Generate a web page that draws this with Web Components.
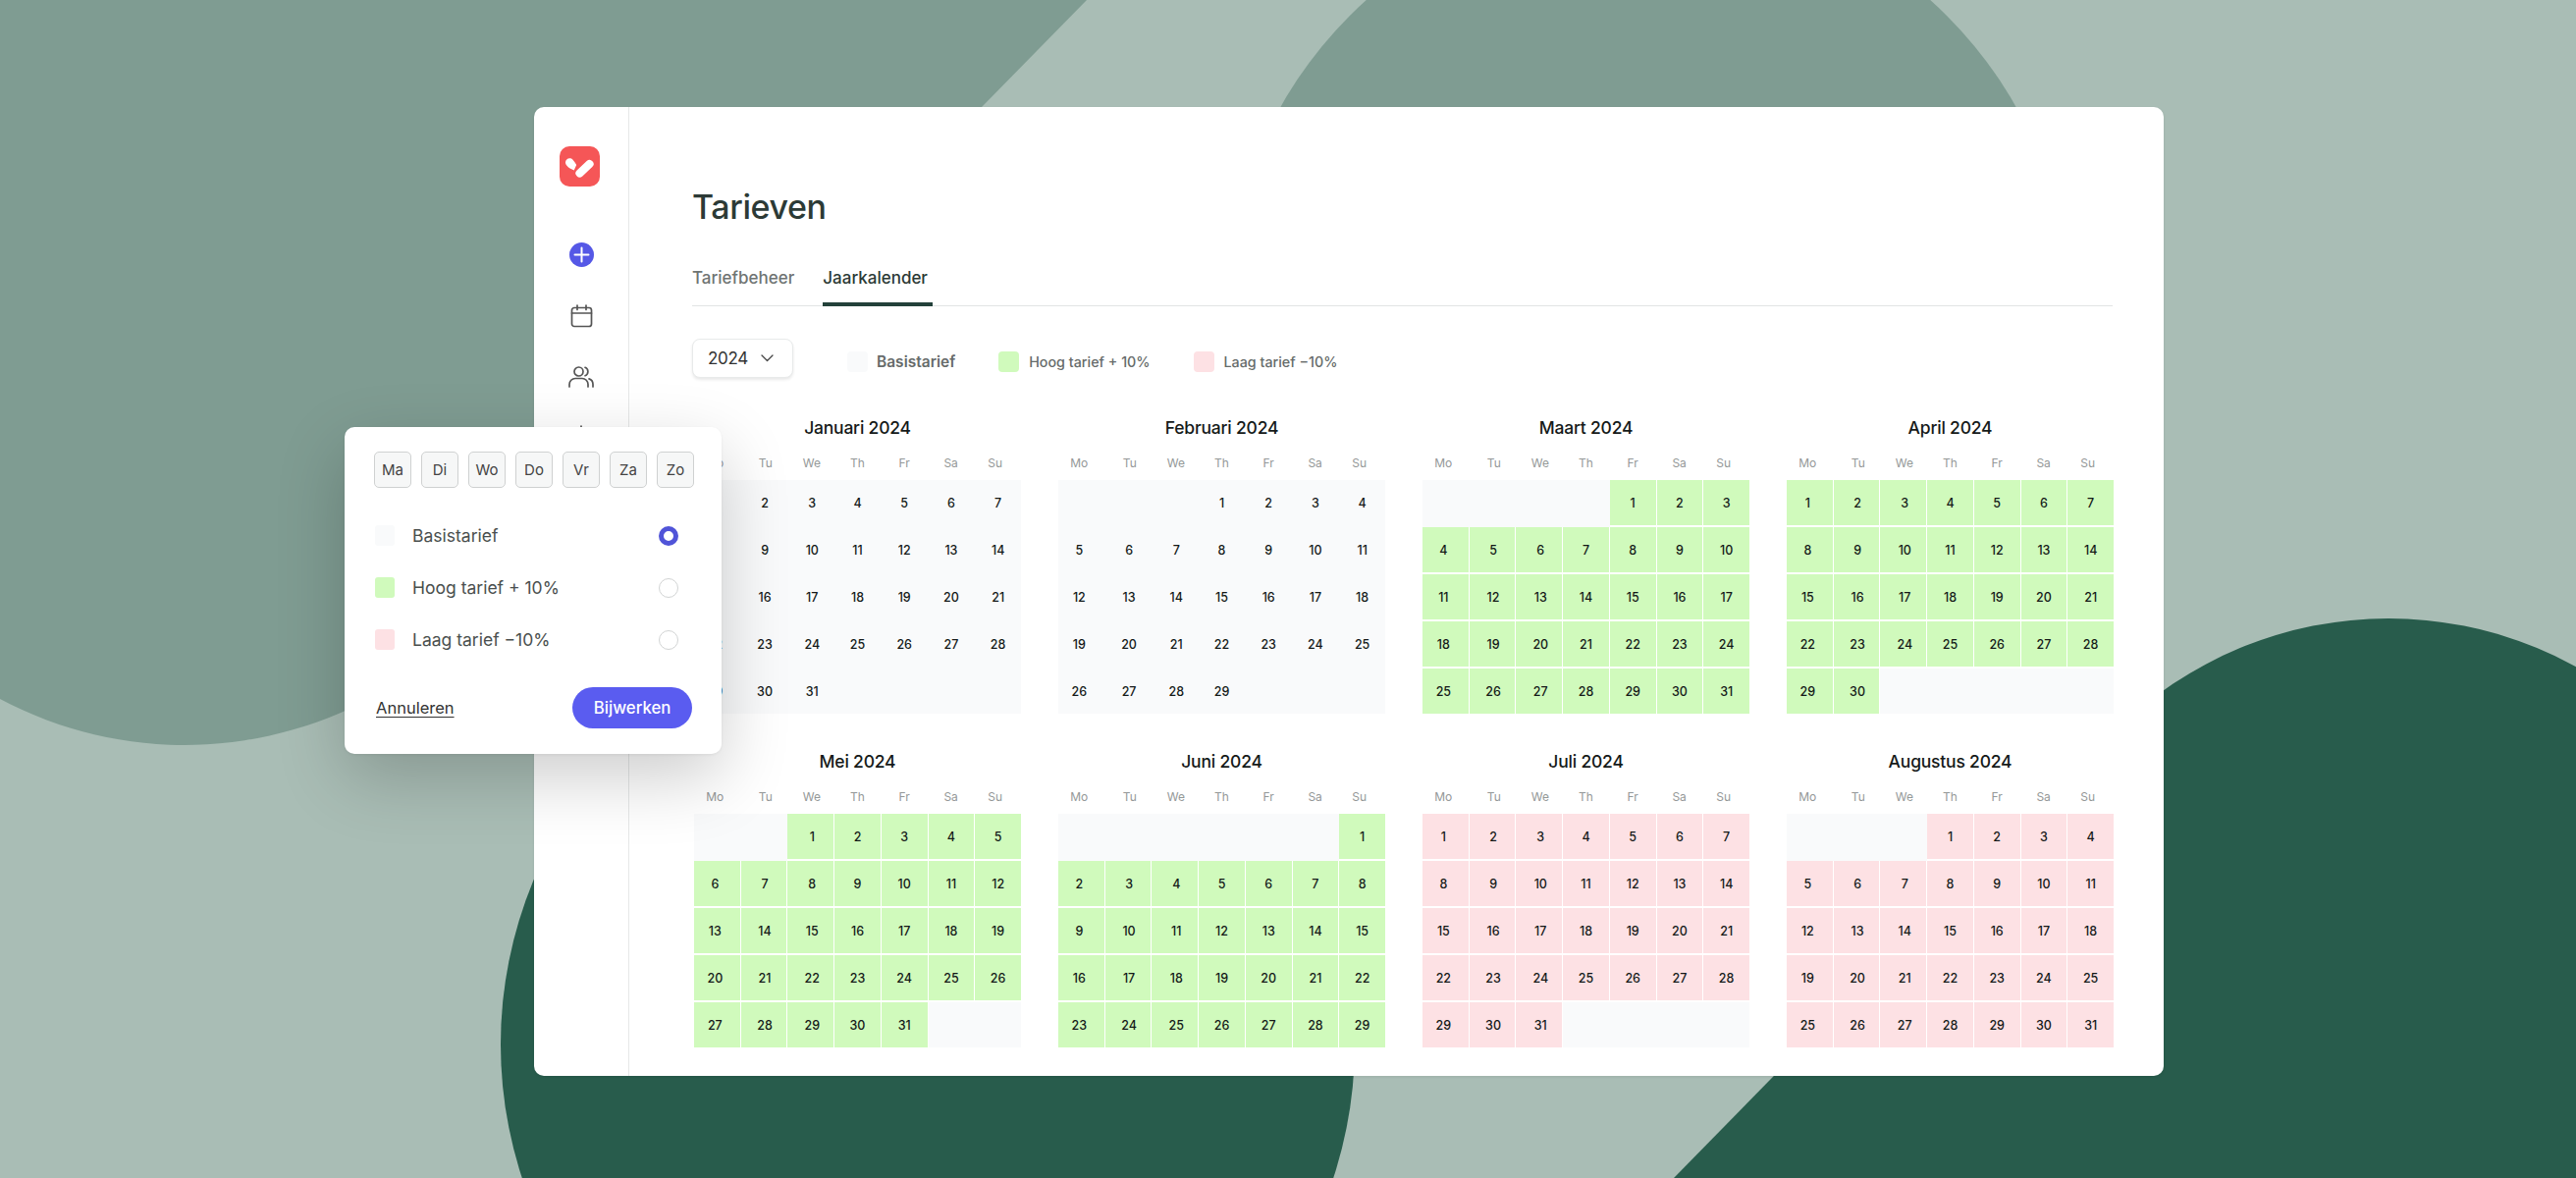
<!DOCTYPE html>
<html lang="nl">
<head>
<meta charset="utf-8">
<title>Tarieven</title>
<style>
html, body { margin: 0; padding: 0; background: #a9bdb5; }
body { font-family: "Inter", "Liberation Sans", sans-serif; overflow: hidden; }
</style>
</head>
<body>
<rate-page>
  <side-nav slot="nav"></side-nav>

  <page-title>Tarieven</page-title>
  <tab-bar>
    <tab-item>Tariefbeheer</tab-item>
    <tab-item active>Jaarkalender</tab-item>
  </tab-bar>

  <tool-bar>
    <year-select>2024</year-select>
    <legend-item tone="base" strong>Basistarief</legend-item>
    <legend-item tone="high">Hoog tarief + 10%</legend-item>
    <legend-item tone="low">Laag tarief −10%</legend-item>
  </tool-bar>

  <year-grid>
    <cal-month offset="0" days="1-31" tone="base">Januari 2024</cal-month>
    <cal-month offset="3" days="1-29" tone="base">Februari 2024</cal-month>
    <cal-month offset="4" days="1-31" tone="high">Maart 2024</cal-month>
    <cal-month offset="0" days="1-30" tone="high">April 2024</cal-month>
    <cal-month offset="2" days="1-31" tone="high">Mei 2024</cal-month>
    <cal-month offset="6" days="1-29" tone="high">Juni 2024</cal-month>
    <cal-month offset="0" days="1-31" tone="low">Juli 2024</cal-month>
    <cal-month offset="3" days="1-25,25-31" tone="low">Augustus 2024</cal-month>
  </year-grid>

  <rate-popup slot="popup">
    <day-chip>Ma</day-chip><day-chip>Di</day-chip><day-chip>Wo</day-chip><day-chip>Do</day-chip><day-chip>Vr</day-chip><day-chip>Za</day-chip><day-chip>Zo</day-chip>
    <rate-option slot="options" tone="base" checked>Basistarief</rate-option>
    <rate-option slot="options" tone="high">Hoog tarief + 10%</rate-option>
    <rate-option slot="options" tone="low">Laag tarief −10%</rate-option>
  </rate-popup>
</rate-page>

<script>
const Tones = {
  base: "#f9fafb",
  high: "#d0fabc",
  low: "#fde1e4",
};

const WEEKDAYS = ["Mo", "Tu", "We", "Th", "Fr", "Sa", "Su"];

const define = (name, markup, render) => {
  customElements.define(
    name,
    class extends HTMLElement {
      constructor() {
        super();
        this.attachShadow({ mode: "open" });
        this.shadowRoot.innerHTML = markup;
      }
      connectedCallback() {
        if (render) render(this);
      }
    }
  );
};

define("rate-page", `
<style>
:host { display: grid; width: 2624px; height: 1200px; overflow: hidden; position: relative; color: #2c3a36; }
.backdrop, .card { grid-area: 1 / 1; }
.backdrop { width: 2624px; height: 1200px; display: block; }
.card {
  margin: 109px 420px 104px 544px;
  display: flex;
  background: #fff;
  border-radius: 10px;
  box-shadow: 0 1px 3px rgba(0, 0, 0, .08);
  overflow: hidden;
}
main { flex: 1; min-width: 0; padding: 82px 52px 0 64px; display: flex; flex-direction: column; }
.popup { position: absolute; left: 351px; top: 435px; }
</style>
<svg class="backdrop" viewBox="0 0 2624 1200" aria-hidden="true">
  <rect width="2624" height="1200" fill="#a9bdb5"/>
  <path fill="#7f9c92" d="M0 0H1107L1000 109L700 420L588 360A400 400 0 0 1 0 712Z"/>
  <circle cx="1679" cy="320" r="430" fill="#7f9c92"/>
  <circle cx="945" cy="1064" r="435" fill="#285c4c"/>
  <circle cx="2433" cy="1025" r="395" fill="#285c4c"/>
  <path fill="#285c4c" d="M1705 1200L1950 950H2624V1200Z"/>
</svg>
<div class="card">
  <slot name="nav"></slot>
  <main><slot></slot></main>
</div>
<div class="popup"><slot name="popup"></slot></div>
`);

define("side-nav", `
<style>
:host { display: flex; flex-direction: column; align-items: center; width: 96px; flex: none; border-right: 1px solid #e6e8e8; padding-top: 40px; box-sizing: content-box; }
svg { display: block; flex: none; }
.logo { margin-left: -3px; }
.plus { margin-top: 57px; }
.cal { margin-top: 38px; }
.users { margin-top: 39px; }
.tag { margin-top: 38px; }
</style>
<svg class="logo" width="41" height="41" viewBox="0 0 41 41">
  <rect width="41" height="41" rx="10" fill="#f55657"/>
  <path d="M6 16.500c0-4 5-5.700 7.500-2.700c1.600 1.800 2.900 3.500 3.700 5.200l-2.500 5.500c-4-1.500-8.700-4.800-8.700-8z" fill="#fff"/>
  <path d="M20.500 27.500L30.500 18" stroke="#fff" stroke-width="8.200" stroke-linecap="round" fill="none"/>
</svg>
<svg class="plus" width="25" height="25" viewBox="0 0 25 25">
  <circle cx="12.500" cy="12.500" r="12.500" fill="#5558e6"/>
  <path d="M12.500 5.500v14M5.500 12.500h14" stroke="#fff" stroke-width="2" stroke-linecap="round"/>
</svg>
<svg class="cal" width="23" height="24" viewBox="0 0 23 24" fill="none" stroke="#555" stroke-width="1.700" stroke-linecap="round" stroke-linejoin="round">
  <rect x="1.500" y="3.500" width="20" height="19" rx="2.500"/>
  <path d="M1.500 9h20M7 1v4.500M16 1v4.500"/>
</svg>
<svg class="users" width="26" height="22" viewBox="0 0 26 22" fill="none" stroke="#555" stroke-width="1.700" stroke-linecap="round">
  <circle cx="10.500" cy="5.500" r="4.500"/>
  <path d="M1 21v-2.500c0-3.300 2.700-6 6-6h7c3.300 0 6 2.700 6 6V21"/>
  <path d="M17 1.300a4.500 4.500 0 0 1 0 8.400M21 12.900c2.400.8 4 3 4 5.600V21"/>
</svg>
<svg class="tag" width="24" height="24" viewBox="0 0 24 24" fill="none" stroke="#555" stroke-width="1.700" stroke-linecap="round">
  <path d="M12 1v22M5 6h14M5 18h14"/>
</svg>
`);

define("page-title", `
<style>
:host { display: block; font: 500 34px/40px "Inter", "Liberation Sans", sans-serif; letter-spacing: -.4px; color: #2c3a36; }
</style>
<slot></slot>
`);

define("tab-bar", `
<style>
:host { display: flex; gap: 27px; margin-top: 40px; height: 40px; border-bottom: 1px solid #e2e4e4; }
</style>
<slot></slot>
`);

define("tab-item", `
<style>
:host { display: block; height: 41px; box-sizing: border-box; padding-right: 2px; font: 500 17px/24px "Inter", "Liberation Sans", sans-serif; color: #6f7473; }
:host([active]) { color: #2c3a36; border-bottom: 4px solid #23413a; padding-right: 5px; }
</style>
<slot></slot>
`);

define("tool-bar", `
<style>
:host { display: flex; align-items: center; margin-top: 33px; height: 40px; gap: 44px; }
::slotted(year-select) { margin-right: 11px; }
</style>
<slot></slot>
`);

define("year-select", `
<style>
:host { display: flex; align-items: center; justify-content: space-between; width: 103px; height: 40px; box-sizing: border-box; padding: 0 19px 0 15px; border: 1px solid #e8eaea; border-radius: 8px; box-shadow: 0 2px 3px rgba(0, 0, 0, .09); background: #fff; font: 400 17px/24px "Inter", "Liberation Sans", sans-serif; color: #333; letter-spacing: -.3px; }
svg { display: block; }
</style>
<slot></slot>
<svg width="13" height="8" viewBox="0 0 13 8" fill="none" stroke="#444" stroke-width="1.300" stroke-linecap="round" stroke-linejoin="round"><path d="M1 1l5.500 5.500L12 1"/></svg>
`);

define("legend-item", `
<style>
:host { display: flex; align-items: center; gap: 10px; margin-top: 6px; font: 500 14.300px/21px "Inter", "Liberation Sans", sans-serif; color: #666b6a; }
:host([strong]) { font-size: 15.500px; font-weight: 600; gap: 9px; }
.swatch { width: 21px; height: 21px; border-radius: 4px; flex: none; }
</style>
<span class="swatch"></span><slot></slot>
`, (el) => {
  el.shadowRoot.querySelector(".swatch").style.background = Tones[el.getAttribute("tone")];
});

define("year-grid", `
<style>
:host { display: grid; grid-template-columns: repeat(4, 333px); column-gap: 38px; row-gap: 37px; margin: 39px 0 0 2px; }
</style>
<slot></slot>
`);

const CAL_MONTH_TEMPLATE = `
<style>
:host { display: block; width: 333px; font-family: "Inter", "Liberation Sans", sans-serif; --base: ${Tones.base}; }
.name { font-size: 17.500px; line-height: 24px; font-weight: 500; letter-spacing: -.2px; color: #151a19; text-align: center; }
.week, .days { display: grid; grid-template-columns: repeat(7, 1fr); }
.week { margin-top: 16px; height: 16px; line-height: 16px; font-size: 12px; color: #949898; text-align: center; }
.week span:nth-child(1) { padding-right: 5px; }
.week span:nth-child(2) { padding-left: 3px; }
.week span:nth-child(3) { padding-left: 2px; }
.week span:nth-child(7) { padding-right: 5px; }
.days { margin-top: 9px; grid-template-rows: repeat(5, 46px); column-gap: 1px; row-gap: 2px; }
.day { display: flex; align-items: center; justify-content: center; font-size: 12.500px; font-weight: 500; color: #151a19; }
.day:nth-child(7n+1) { padding-right: 4px; }
.day:nth-child(7n+2) { padding-left: 2px; }
.day:nth-child(7n+3) { padding-left: 3px; }
/* blank and base cells run together, the white gaps only show on coloured days */
.base { background: var(--base); box-shadow: 1px 0 var(--base), 0 2px var(--base), 1px 2px var(--base); }
.base:nth-child(7n) { box-shadow: 0 2px var(--base); }
.base:nth-child(n+29) { box-shadow: 1px 0 var(--base); }
.base:nth-child(35) { box-shadow: none; }
</style>
<div class="name"><slot></slot></div>
<div class="week"></div>
<div class="days"></div>
`;

// the source has 25 twice in augustus and no 30 in juni, so days are listed as ranges
const expandDays = (ranges) =>
  ranges.split(",").flatMap((range) => {
    const [from, to] = range.split("-").map(Number);
    return Array.from({ length: to - from + 1 }, (_, i) => from + i);
  });

define("cal-month", CAL_MONTH_TEMPLATE, (el) => {
  const root = el.shadowRoot;
  root.querySelector(".week").innerHTML = WEEKDAYS.map((d) => `<span>${d}</span>`).join("");
  const toneName = el.getAttribute("tone");
  const offset = Number(el.getAttribute("offset"));
  const days = expandDays(el.getAttribute("days"));
  let cells = "";
  for (let i = 0; i < 35; i++) {
    const n = days[i - offset];
    if (n && toneName !== "base") {
      cells += `<span class="day" style="background:${Tones[toneName]}">${n}</span>`;
    } else {
      cells += `<span class="day base">${n || ""}</span>`;
    }
  }
  root.querySelector(".days").innerHTML = cells;
});

define("rate-popup", `
<style>
:host { display: block; width: 384px; height: 333px; box-sizing: border-box; padding: 25px 28px 26px 30px; background: #fff; border-radius: 10px; box-shadow: 0 24px 70px rgba(0, 0, 0, .2), 0 1px 3px rgba(0, 0, 0, .06); font-family: "Inter", "Liberation Sans", sans-serif; }
.chips { display: flex; gap: 10px; }
.options { display: flex; flex-direction: column; gap: 32px; margin-top: 38px; padding-left: 1px; }
.actions { display: flex; align-items: center; justify-content: space-between; margin-top: 38px; padding: 0 2px; }
.cancel { font-size: 16.500px; line-height: 22px; color: #333; text-decoration: underline; text-underline-offset: 3px; }
.update { display: flex; align-items: center; justify-content: center; width: 122px; height: 42px; border-radius: 21px; background: #5a5cf0; color: #fff; font-size: 16.800px; font-weight: 500; }
</style>
<div class="chips"><slot></slot></div>
<div class="options"><slot name="options"></slot></div>
<div class="actions">
  <span class="cancel">Annuleren</span>
  <span class="update">Bijwerken</span>
</div>
`);

define("day-chip", `
<style>
:host { display: flex; align-items: center; justify-content: center; width: 38px; height: 37px; box-sizing: border-box; border: 1px solid #cfd1d1; border-radius: 5px; background: #f6f7f7; font-size: 15px; color: #444; }
</style>
<slot></slot>
`);

define("rate-option", `
<style>
:host { display: flex; align-items: center; gap: 18px; height: 21px; padding-right: 16px; font-size: 17.500px; color: #4a4f4e; }
.swatch { width: 20px; height: 21px; border-radius: 3px; flex: none; }
.label { flex: 1; }
.radio { width: 20px; height: 20px; box-sizing: border-box; border-radius: 50%; border: 1px solid #d2d4d4; background: #fff; flex: none; }
:host([checked]) .radio { border: 5px solid #5054d8; }
</style>
<span class="swatch"></span><span class="label"><slot></slot></span><span class="radio"></span>
`, (el) => {
  el.shadowRoot.querySelector(".swatch").style.background = Tones[el.getAttribute("tone")];
});
</script>
</body>
</html>
